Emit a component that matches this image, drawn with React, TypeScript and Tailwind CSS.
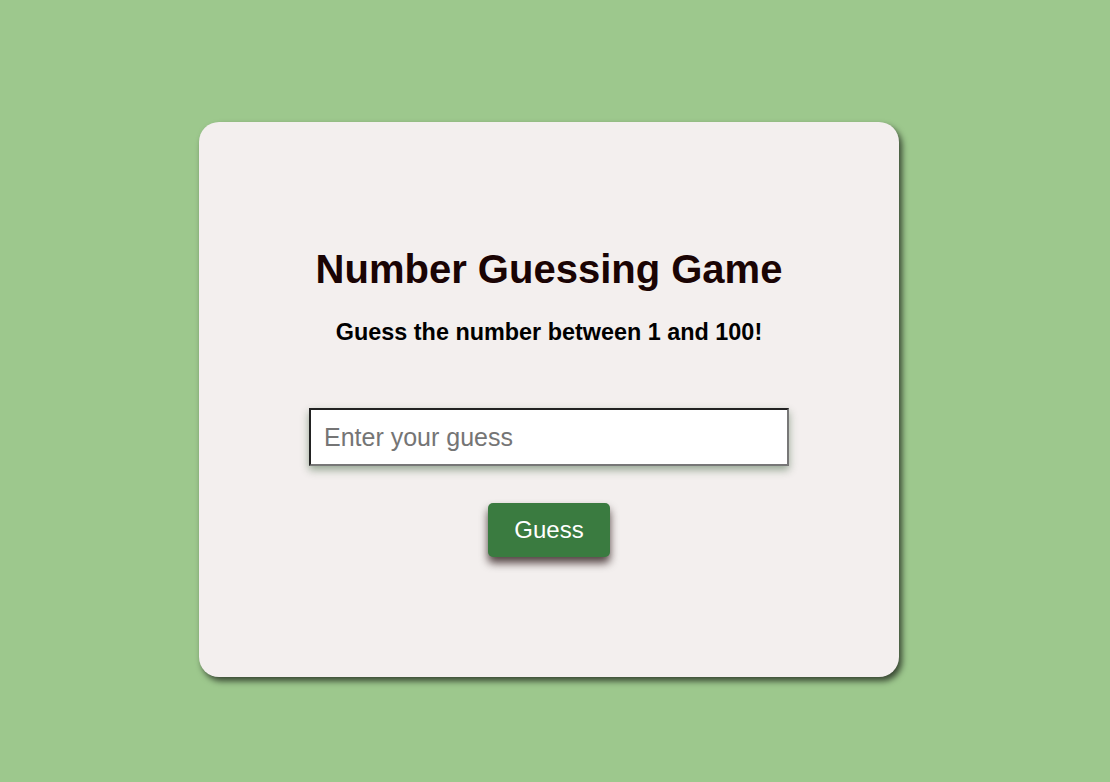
export default function App() {
  return (
    <main className="min-h-screen w-full bg-[#9DC88D] font-['Liberation_Sans',Arial,sans-serif]">
      <div className="flex justify-center pt-[122px] pr-[12px]">
        <div className="flex h-[555px] w-[700px] flex-col items-center rounded-[20px] bg-[#F3EFEE] pt-[124px] shadow-[3px_4px_6px_rgba(0,0,0,0.65)]">
          <h1 className="text-[40px] leading-[46px] font-bold text-[#1a0404]">
            Number Guessing Game
          </h1>
          <p className="mt-[27px] text-[23.4px] leading-[27px] font-bold text-black">
            Guess the number between 1 and 100!
          </p>

          <input
            type="number"
            placeholder="Enter your guess"
            className="mt-[62px] h-[58px] w-[480px] border-2 border-t-[#222] border-l-[#222] border-r-[#777] border-b-[#777] bg-white pl-[13px] text-[25px] text-black outline-none placeholder:text-[#757575] shadow-[0_4px_8px_rgba(40,80,40,0.45)] [appearance:textfield]"
          />

          <button
            type="button"
            className="mt-[37px] h-[54px] w-[122px] rounded-[5px] bg-[#3A7B40] text-[24px] text-white shadow-[0_6px_8px_rgba(30,10,10,0.75)]"
          >
            Guess
          </button>
        </div>
      </div>
    </main>
  );
}
